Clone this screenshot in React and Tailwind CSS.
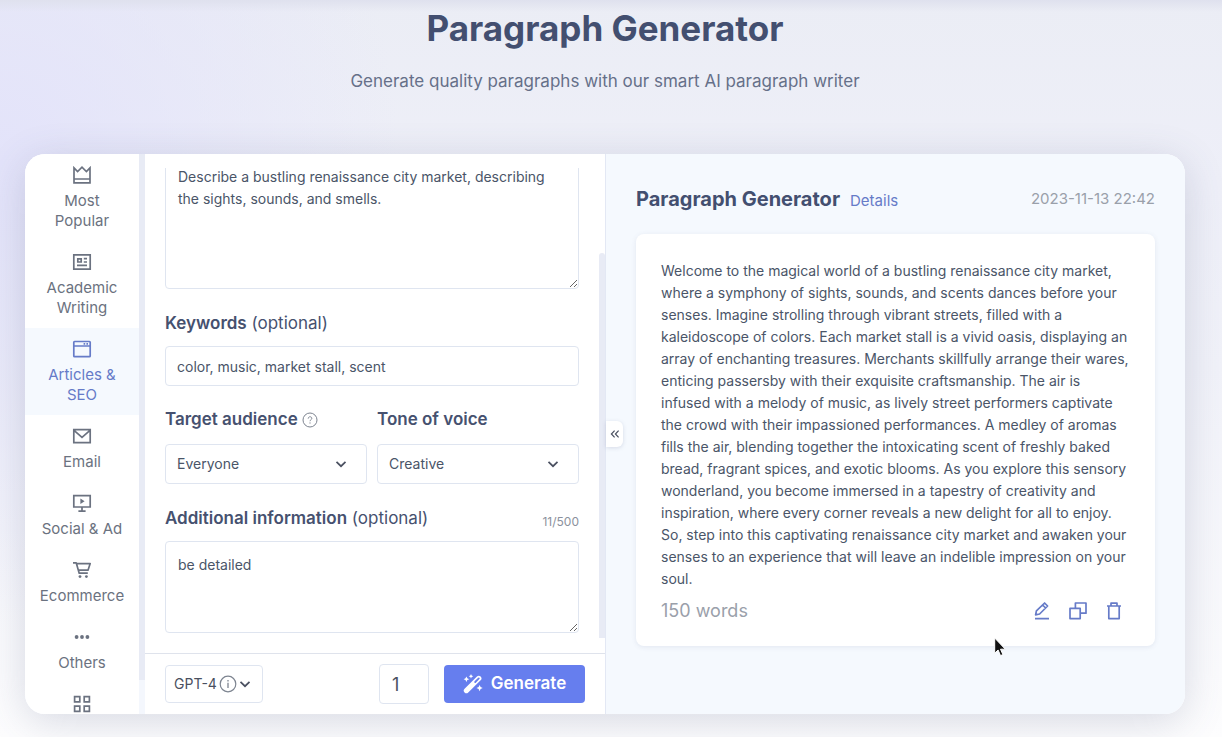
import React, { useState } from 'react';
import clsx from 'clsx';

const Icon = ({ size = 22, children }) => (
  <svg
    width={size}
    height={size}
    viewBox="0 0 22 22"
    fill="none"
    stroke="currentColor"
    strokeWidth="1.7"
    className="shrink-0"
    aria-hidden="true"
  >
    {children}
  </svg>
);

const CATEGORIES = [
  {
    name: 'Most Popular',
    icon: <path d="M3 3.8v15h16v-15l-3.6 3.8L11 3.2 6.6 7.6 3 3.8zM3 15h16" />
  },
  {
    name: 'Academic Writing',
    icon: <path d="M2.8 3.8h16.4v14.4H2.8zM6.8 7.8h3.4v3.2H6.8zM12.8 7.6H16M12.8 11H16M6 14.4h10" />
  },
  {
    name: 'Articles & SEO',
    icon: (
      <>
        <rect x="2.8" y="3.5" width="16.4" height="15.2" rx="0.8" />
        <path d="M2.8 8h16.4M12.6 5.8h1.6M15.4 5.8H17" />
      </>
    )
  },
  {
    name: 'Email',
    icon: <path d="M2.8 4.6h16.4v13H2.8zM3 5.4l8 7 8-7" />
  },
  {
    name: 'Social & Ad',
    icon: (
      <>
        <path d="M2.8 3.6h16.4V15H2.8zM11 15v4M7.4 19.2h7.2" />
        <path d="M9.4 6.6v5.4l4.2-2.7z" fill="currentColor" stroke="none" />
      </>
    )
  },
  {
    name: 'Ecommerce',
    icon: (
      <>
        <path d="M2 3.8h3.2l3 10.4h8.6M5.4 4.6h13.8l-2.2 6.6H7.4" strokeLinejoin="round" />
        <circle cx="9" cy="17.6" r="1.4" fill="currentColor" stroke="none" />
        <circle cx="15.4" cy="17.6" r="1.4" fill="currentColor" stroke="none" />
      </>
    )
  },
  {
    name: 'Others',
    icon: (
      <g fill="currentColor" stroke="none">
        <circle cx="5.6" cy="11" r="1.9" />
        <circle cx="11" cy="11" r="1.9" />
        <circle cx="16.4" cy="11" r="1.9" />
      </g>
    )
  }
];

const RESULT =
  'Welcome to the magical world of a bustling renaissance city market, where a symphony of sights, sounds, and scents dances before your senses. Imagine strolling through vibrant streets, filled with a kaleidoscope of colors. Each market stall is a vivid oasis, displaying an array of enchanting treasures. Merchants skillfully arrange their wares, enticing passersby with their exquisite craftsmanship. The air is infused with a melody of music, as lively street performers captivate the crowd with their impassioned performances. A medley of aromas fills the air, blending together the intoxicating scent of freshly baked bread, fragrant spices, and exotic blooms. As you explore this sensory wonderland, you become immersed in a tapestry of creativity and inspiration, where every corner reveals a new delight for all to enjoy. So, step into this captivating renaissance city market and awaken your senses to an experience that will leave an indelible impression on your soul.';

const Chevron = ({ className }) => (
  <svg width="12" height="12" viewBox="0 0 12 12" fill="none" stroke="currentColor" strokeWidth="1.7" className={className} aria-hidden="true">
    <path d="M1.5 3.8L6 8.2l4.5-4.4" />
  </svg>
);

const SelectField = ({ id, label, help, value, onChange, options }) => (
  <div className="flex-1">
    <div className="mb-3 flex h-6 items-center gap-1">
      <label htmlFor={id} className="text-[17px] font-semibold text-[#46516f]">{label}</label>
      {help && (
        <svg width="16" height="16" viewBox="0 0 16 16" fill="none" stroke="#7d8490" strokeWidth="1" aria-hidden="true">
          <circle cx="8" cy="8" r="7" />
          <path d="M6.2 6.6c0-2.4 3.6-2.4 3.6-.2 0 1.3-1.8 1.4-1.8 2.8M8 10.4v1.2" />
        </svg>
      )}
    </div>
    <div className="relative">
      <select
        id={id}
        value={value}
        onChange={(e) => onChange(e.target.value)}
        className="h-10 w-full appearance-none rounded border border-[#dfe5f0] bg-white px-[11px] text-sm text-[#4a5568] outline-none"
      >
        {options.map(opt => <option key={opt}>{opt}</option>)}
      </select>
      <Chevron className="pointer-events-none absolute top-[14px] right-5 text-[#4a5060]" />
    </div>
  </div>
);

const Sidebar = ({ active, onSelect }) => (
  <nav className="flex w-[120px] shrink-0 overflow-hidden bg-[#f4f7fd]">
    <div className="min-w-0 flex-1 bg-white text-[#6b7280]">
      {CATEGORIES.map(cat => (
        <button
          key={cat.name}
          type="button"
          onClick={() => onSelect(cat.name)}
          className={clsx(
            'flex w-full flex-col items-center gap-[5px] px-[14px] py-[10px] text-[15px] leading-5',
            active === cat.name && 'bg-[#f5f9fe] text-[#667bc8]'
          )}
        >
          <Icon>{cat.icon}</Icon>
          <span>{cat.name}</span>
        </button>
      ))}
      <button type="button" aria-label="All" className="flex w-full justify-center pt-[10px]">
        <Icon>
          <path d="M3.6 3.6h5.2v5.2H3.6zM13.2 3.6h5.2v5.2h-5.2zM3.6 13.2h5.2v5.2H3.6zM13.2 13.2h5.2v5.2h-5.2z" />
        </Icon>
      </button>
    </div>
    <div className="h-[526px] w-[6px] bg-[#e8ebf5]" />
  </nav>
);

const App = () => {
  const [category, setCategory] = useState('Articles & SEO');
  const [prompt, setPrompt] = useState('Describe a bustling renaissance city market, describing the sights, sounds, and smells.');
  const [keywords, setKeywords] = useState('color, music, market stall, scent');
  const [audience, setAudience] = useState('Everyone');
  const [tone, setTone] = useState('Creative');
  const [info, setInfo] = useState('be detailed');
  const [count, setCount] = useState('1');

  return (
    <div className="relative min-h-screen overflow-hidden bg-[radial-gradient(ellipse_400px_460px_at_0%_22%,#e3e3fa_0%,#e3e3fa00_100%),linear-gradient(180deg,#ebedf5_0%,#eeeff8_25%,#f1f2f9_50%,#fdfdfe_100%)] pr-[37px] pb-[23px] pl-[25px] font-['Inter',sans-serif]">
      <div className="pointer-events-none absolute inset-x-0 top-0 h-3 bg-linear-to-b from-[#dfe1ee] to-transparent" />

      <header className="relative h-[154px] pt-1 text-center">
        <h1 className="text-[35px] leading-[48px] font-bold text-[#434f70]">Paragraph Generator</h1>
        <p className="mt-[17px] text-[17px] leading-6 text-[#667089]">
          Generate quality paragraphs with our smart AI paragraph writer
        </p>
      </header>

      <main className="relative mx-auto flex h-[560px] max-w-[1160px] overflow-hidden rounded-[20px] bg-white shadow-[0_8px_40px_rgba(70,80,120,0.2)]">
        <Sidebar active={category} onSelect={setCategory} />

        <form className="flex w-[460px] shrink-0 flex-col" onSubmit={(e) => e.preventDefault()}>
          <div className="flex min-h-0 flex-1 pt-[14px] pb-[15px]">
            <div className="flex min-w-0 flex-1 flex-col justify-end gap-[22px] overflow-hidden pr-5 pb-[5px] pl-5">
              <textarea
                aria-label="Content"
                value={prompt}
                onChange={(e) => setPrompt(e.target.value)}
                className="h-[136px] w-full shrink-0 rounded border border-[#dfe5f0] p-3 text-sm leading-[22px] text-[#4a5568] outline-none"
              />
              <div>
                <label htmlFor="keywords" className="mb-[11px] block text-[17px] leading-6 text-[#46516f]">
                  <span className="font-semibold">Keywords</span> (optional)
                </label>
                <input
                  id="keywords"
                  value={keywords}
                  onChange={(e) => setKeywords(e.target.value)}
                  className="block h-10 w-full rounded border border-[#dfe5f0] px-[11px] text-sm text-[#4a5568] outline-none"
                />
              </div>
              <div className="flex gap-[10px]">
                <SelectField
                  id="audience"
                  label="Target audience"
                  help
                  value={audience}
                  onChange={setAudience}
                  options={['Everyone', 'Students', 'Professionals']}
                />
                <SelectField
                  id="tone"
                  label="Tone of voice"
                  value={tone}
                  onChange={setTone}
                  options={['Creative', 'Formal', 'Friendly']}
                />
              </div>
              <div>
                <div className="mb-[11px] flex h-6 items-end justify-between">
                  <label htmlFor="info" className="text-[17px] leading-6 text-[#46516f]">
                    <span className="font-semibold">Additional information</span> (optional)
                  </label>
                  <span className="text-xs leading-4 text-[#8b919d]">{info.length}/500</span>
                </div>
                <textarea
                  id="info"
                  value={info}
                  onChange={(e) => setInfo(e.target.value)}
                  className="block h-[92px] w-full rounded border border-[#dfe5f0] p-3 text-sm leading-[22px] text-[#4a5568] outline-none"
                />
              </div>
            </div>
            <div className="h-[385px] w-[6px] shrink-0 self-end rounded-t-sm bg-[#e8ebf5]" />
          </div>

          <div className="flex h-[61px] shrink-0 items-center border-t border-[#dfe3ec] px-5">
            <button
              type="button"
              className="flex h-[38px] w-[98px] items-center gap-[2px] rounded border border-[#dfe5f0] pl-2 text-sm text-[#4a5060]"
            >
              GPT-4
              <svg width="18" height="18" viewBox="0 0 18 18" fill="none" stroke="#7d8490" aria-hidden="true">
                <circle cx="9" cy="9" r="7.8" strokeWidth="1.2" />
                <path d="M9 5v1.4M9 7.8V13" strokeWidth="1.3" />
              </svg>
              <Chevron />
            </button>
            <input
              aria-label="Number of results"
              value={count}
              onChange={(e) => setCount(e.target.value)}
              className="mr-[15px] ml-auto h-10 w-[50px] rounded border border-[#dfe5f0] px-3 text-lg text-[#4a5060] outline-none"
            />
            <button
              type="submit"
              className="flex h-[38px] w-[141px] items-center justify-center gap-2 rounded bg-[#667eee] text-[17px] font-semibold text-white"
            >
              <svg width="20" height="20" viewBox="0 0 20 20" fill="none" aria-hidden="true">
                <path d="M3.4 16.6L15.8 4.4" stroke="#fff" strokeWidth="5.2" strokeLinecap="round" />
                <path d="M12.2 8L15.8 4.4" stroke="#667eee" strokeWidth="1.8" strokeLinecap="round" />
                <path
                  d="M8 0l.7 1.6 1.6.7-1.6.7L8 4.6 7.3 3l-1.6-.7 1.6-.7zM3.4 2.4l.9 1.9 1.9.9-1.9.9-.9 1.9-.9-1.9-1.9-.9 1.9-.9zM16.6 11l1 2.1 2.1 1-2.1 1-1 2.1-1-2.1-2.1-1 2.1-1z"
                  fill="#fff"
                />
              </svg>
              Generate
            </button>
          </div>
        </form>

        <section className="relative min-w-0 flex-1 border-l border-[#e3e8f4] bg-[#f5f9fe] px-[30px] pt-[30px]">
          <button
            type="button"
            aria-label="Collapse form"
            className="absolute top-[267px] left-0 flex h-[26px] w-[17px] items-center justify-center rounded-r-md bg-white text-[#4a5060] shadow-[0_1px_4px_rgba(90,100,140,0.2)]"
          >
            <svg width="10" height="10" viewBox="0 0 10 10" fill="none" stroke="currentColor" strokeWidth="1.2" aria-hidden="true">
              <path d="M4.6 1.6L1.4 5l3.2 3.4M8.6 1.6L5.4 5l3.2 3.4" />
            </svg>
          </button>

          <div className="flex h-[50px] items-start">
            <h2 className="text-xl leading-[30px] font-bold text-[#434f70]">Paragraph Generator</h2>
            <a href="#details" className="ml-[10px] text-[15px] leading-[34px] text-[#667bc8]">Details</a>
            <time className="ml-auto text-[15px] leading-[30px] text-[#9aa0aa]">2023-11-13 22:42</time>
          </div>

          <article className="rounded-lg bg-white px-[25px] pt-[26px] pb-[23px] shadow-[0_1px_5px_rgba(90,100,140,0.12)]">
            <p className="text-sm leading-[22px] text-[#4a5568]">{RESULT}</p>
            <div className="mt-[9px] flex h-6 items-center">
              <span className="text-lg text-[#9aa0aa]">150 words</span>
              <div className="ml-auto flex gap-[14px] pr-[5px] text-[#667bc8]">
                <button type="button" aria-label="Edit">
                  <Icon>
                    <path d="M4.6 14.8l.8-4L13.6 3l3 3-8 8zM11.6 5l3 3M4 18.6h14" strokeLinejoin="round" />
                  </Icon>
                </button>
                <button type="button" aria-label="Copy">
                  <Icon>
                    <path d="M3 8.4h10.2v10.2H3zM8.4 8.4V3H19v10.2h-5.6" strokeLinejoin="round" />
                  </Icon>
                </button>
                <button type="button" aria-label="Delete">
                  <Icon>
                    <path d="M4 6h14M5.8 6v12.6h10.4V6M8 6V3.2h6V6" strokeLinejoin="round" />
                  </Icon>
                </button>
              </div>
            </div>
          </article>
        </section>
      </main>

      {/* mouse pointer */}
      <svg className="pointer-events-none absolute top-[637px] left-[994px]" width="13" height="20" viewBox="0 0 13 20" aria-hidden="true">
        <path d="M.7 1v15.2l3.4-3.2 2.4 5.6 2.4-1-2.4-5.4h4.8z" fill="#111" stroke="#fff" strokeWidth="1" />
      </svg>
    </div>
  );
};

export default App;
